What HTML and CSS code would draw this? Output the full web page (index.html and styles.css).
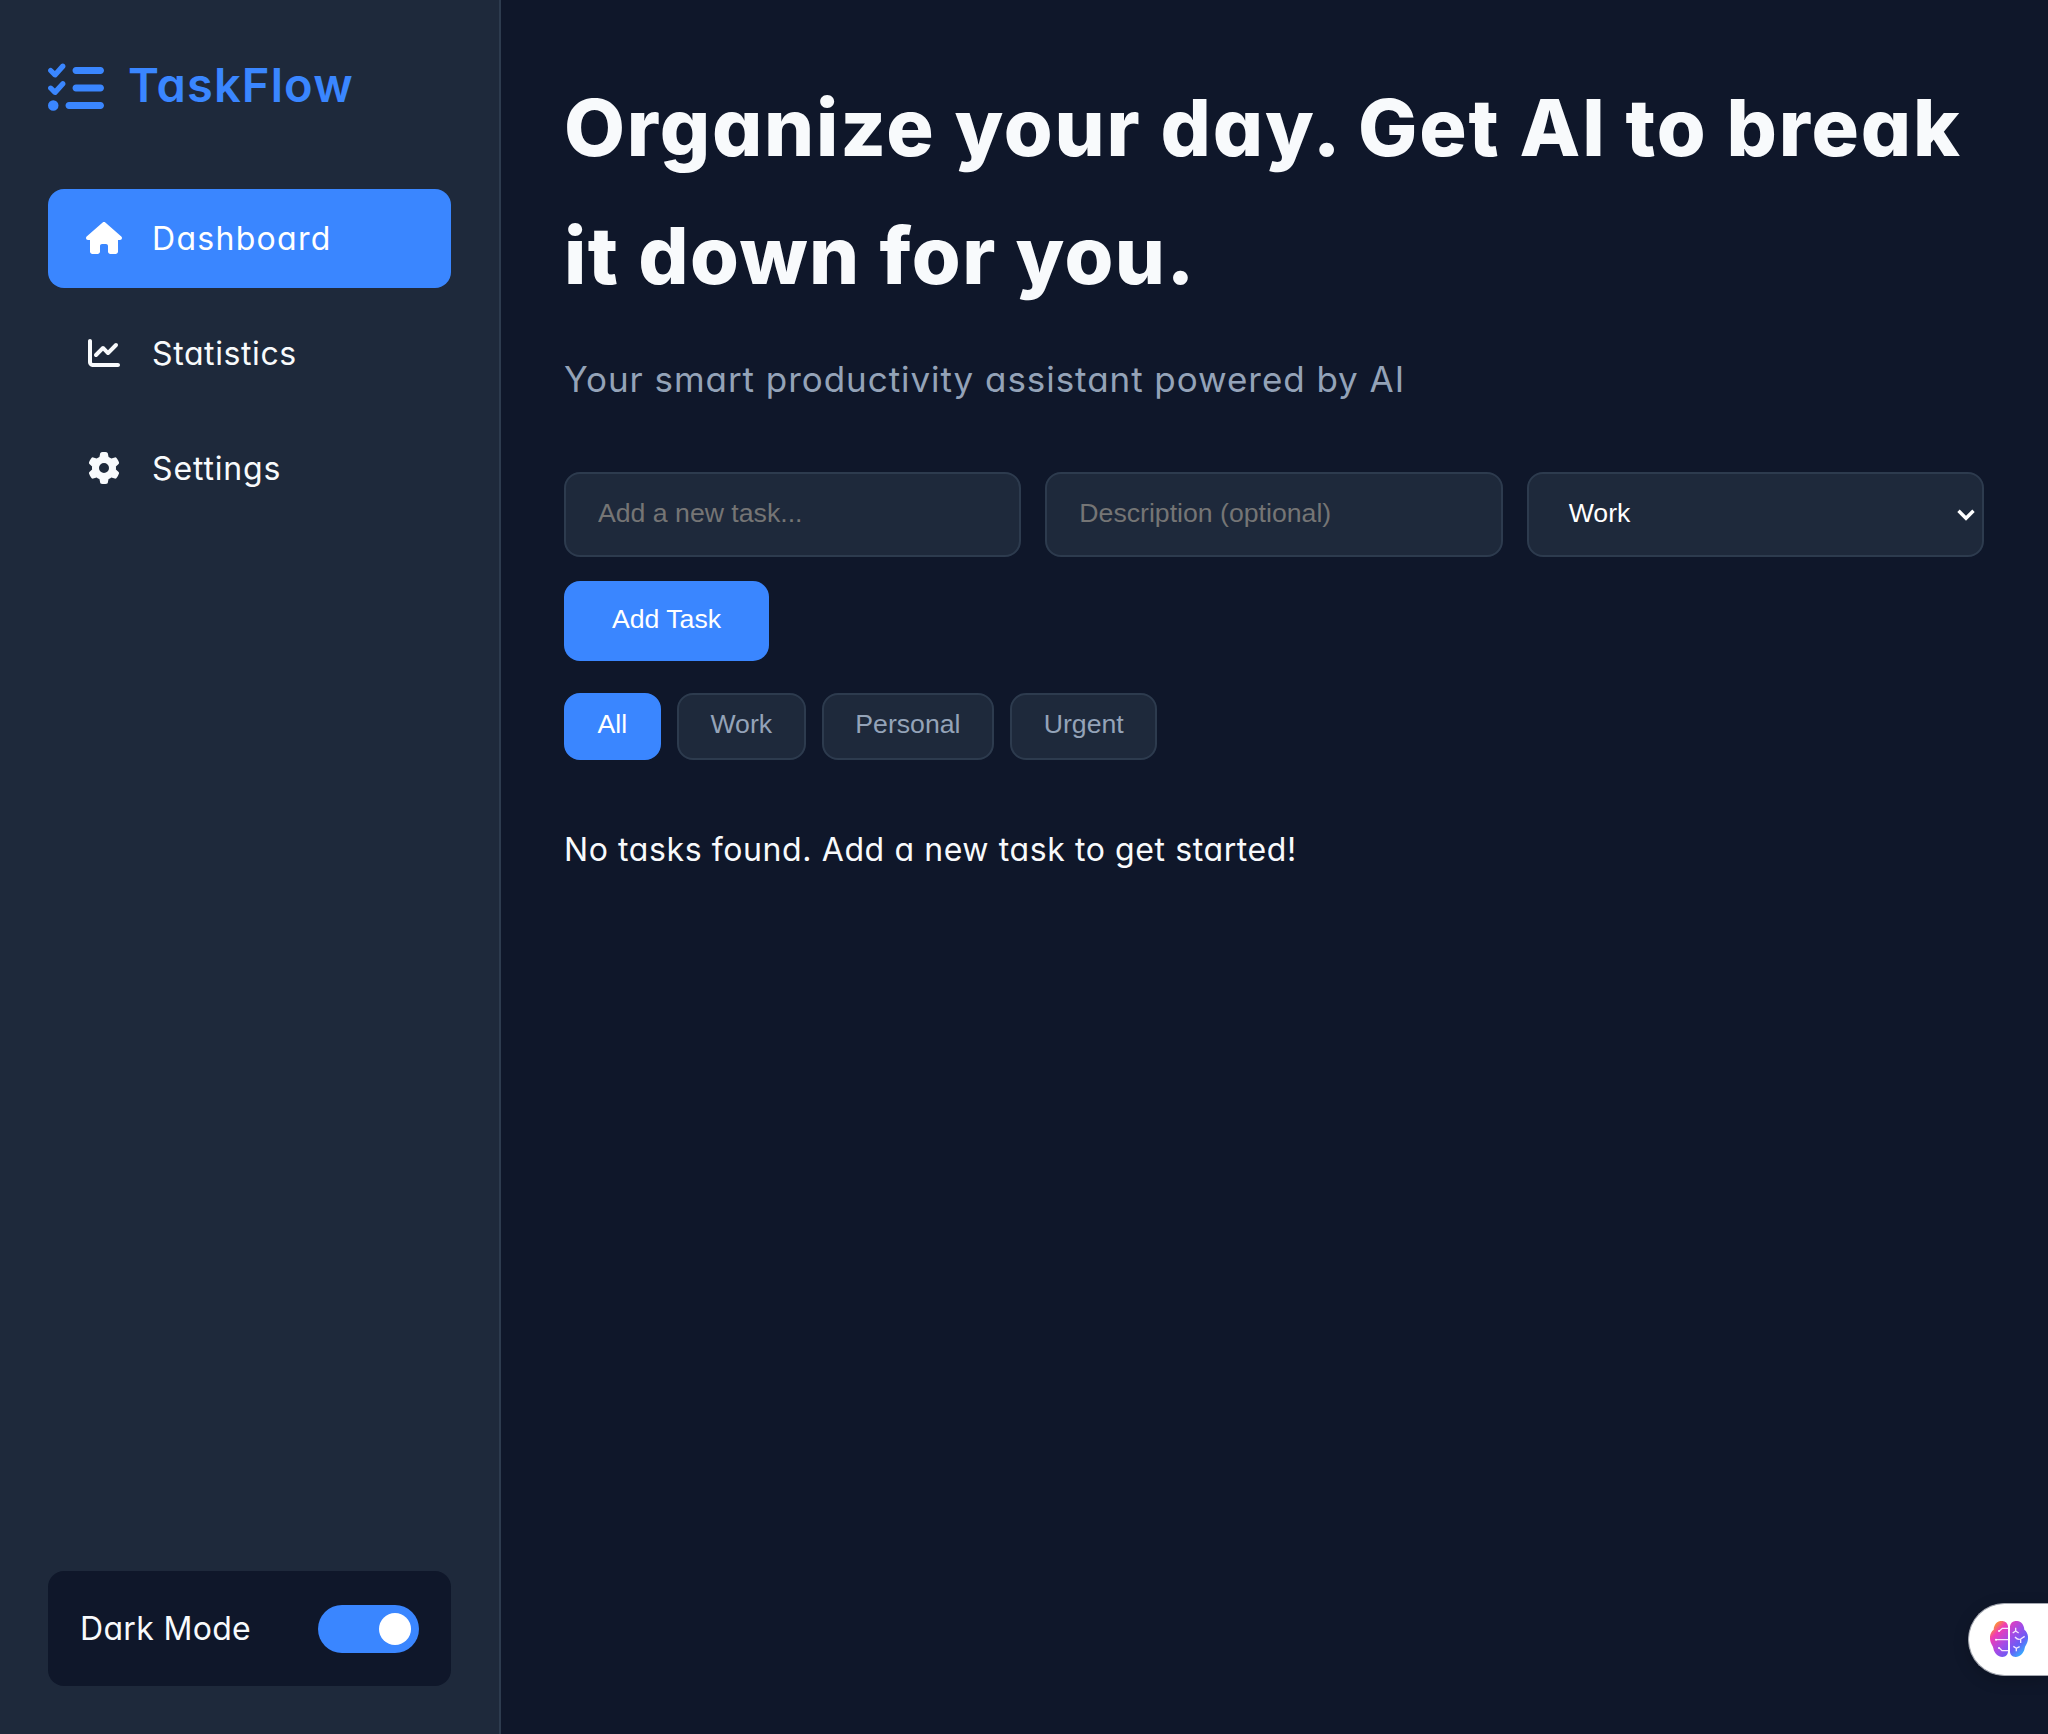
FILE: index.html
```html
<!DOCTYPE html>
<html lang="en">
<head>
<meta charset="utf-8">
<title>TaskFlow</title>
<link rel="stylesheet" href="styles.css">
</head>
<body>
<div class="app">
  <aside class="sidebar">
    <div class="logo">
      <svg class="logo-icon" viewBox="0 0 512 512"><path d="M152.1 38.2c9.9 8.9 10.7 24 1.8 33.900l-72 80c-4.400 4.900-10.600 7.800-17.200 7.900s-12.900-2.400-17.600-7L7 113C-2.300 103.600-2.300 88.400 7 79s24.600-9.400 33.900 0l22.100 22.100 55.100-61.200c8.900-9.900 24-10.700 33.900-1.800zm0 160c9.900 8.900 10.700 24 1.800 33.900l-72 80c-4.400 4.900-10.600 7.800-17.200 7.900s-12.900-2.400-17.600-7L7 273c-9.400-9.400-9.400-24.600 0-33.900s24.600-9.400 33.900 0l22.100 22.100 55.100-61.200c8.900-9.900 24-10.700 33.900-1.800zM224 96c0-17.700 14.300-32 32-32h224c17.700 0 32 14.300 32 32s-14.300 32-32 32H256c-17.700 0-32-14.300-32-32zm0 160c0-17.700 14.300-32 32-32h224c17.700 0 32 14.300 32 32s-14.300 32-32 32H256c-17.700 0-32-14.300-32-32zM160 416c0-17.700 14.300-32 32-32h288c17.700 0 32 14.300 32 32s-14.300 32-32 32H192c-17.700 0-32-14.300-32-32zM48 368a48 48 0 1 1 0 96 48 48 0 1 1 0-96z"/></svg>
      <span class="logo-name">TaskFlow</span>
    </div>
    <nav class="nav">
      <a class="nav-item active"><svg class="nav-icon home" viewBox="0 0 576 512"><path d="M575.8 255.500c0 18-15 32.100-32 32.100h-32l.7 160.200c0 2.700-.2 5.400-.5 8.100V472c0 22.100-17.900 40-40 40H392c-22.100 0-40-17.900-40-40V384c0-17.700-14.300-32-32-32H256c-17.700 0-32 14.300-32 32v88c0 22.100-17.900 40-40 40H104c-22.100 0-40-17.900-40-40V287.600H32c-18 0-32-14-32-32.100 0-9 3-17 10-24L266.400 8c7-7 15-8 22-8s15 2 21 7l255.400 224.500c8 7 12 15 11 24z"/></svg><span class="t-dash">Dashboard</span></a>
      <a class="nav-item"><svg class="nav-icon" viewBox="0 0 512 512"><path d="M64 64c0-17.700-14.300-32-32-32S0 46.300 0 64v336c0 44.200 35.800 80 80 80h400c17.700 0 32-14.300 32-32s-14.300-32-32-32H80c-8.800 0-16-7.200-16-16V64zm406.600 86.600c12.500-12.500 12.500-32.800 0-45.300s-32.800-12.500-45.300 0L320 210.700l-57.400-57.400c-12.500-12.500-32.800-12.500-45.300 0l-112 112c-12.500 12.500-12.500 32.800 0 45.300s32.800 12.500 45.300 0L240 221.300l57.400 57.400c12.500 12.500 32.800 12.500 45.300 0l128-128z"/></svg><span class="t-stat">Statistics</span></a>
      <a class="nav-item"><svg class="nav-icon" viewBox="0 0 512 512"><path d="M495.900 166.600c3.200 8.700 .5 18.400-6.400 24.600l-43.300 39.400c1.100 8.300 1.700 16.800 1.700 25.400s-.6 17.100-1.700 25.400l43.300 39.400c6.900 6.200 9.600 15.900 6.400 24.600c-4.400 11.900-9.700 23.300-15.800 34.300l-4.700 8.100c-6.600 11-14 21.400-22.100 31.200c-5.900 7.200-15.700 9.600-24.500 6.800l-55.700-17.700c-13.400 10.300-28.200 18.900-44 25.400l-12.500 57.100c-2 9.100-9 16.300-18.200 17.800c-13.800 2.300-28 3.500-42.500 3.500s-28.700-1.200-42.500-3.500c-9.200-1.500-16.200-8.700-18.200-17.800l-12.500-57.100c-15.800-6.500-30.600-15.100-44-25.400L83.100 425.900c-8.800 2.800-18.600 .3-24.500-6.800c-8.100-9.800-15.500-20.200-22.100-31.200l-4.700-8.100c-6.100-11-11.400-22.400-15.800-34.300c-3.200-8.700-.5-18.400 6.400-24.600l43.300-39.400C64.600 273.100 64 264.600 64 256s.6-17.100 1.700-25.400L22.400 191.200c-6.900-6.200-9.600-15.900-6.400-24.600c4.400-11.900 9.700-23.300 15.800-34.300l4.700-8.100c6.600-11 14-21.400 22.100-31.200c5.900-7.200 15.700-9.600 24.500-6.800l55.700 17.700c13.400-10.300 28.200-18.900 44-25.400l12.500-57.100c2-9.100 9-16.300 18.200-17.800C227.300 1.200 241.500 0 256 0s28.700 1.200 42.500 3.500c9.200 1.500 16.200 8.700 18.200 17.800l12.500 57.100c15.800 6.500 30.600 15.100 44 25.400l55.700-17.700c8.800-2.800 18.600-.3 24.500 6.800c8.100 9.800 15.500 20.200 22.100 31.200l4.700 8.100c6.100 11 11.400 22.400 15.800 34.300zM256 336a80 80 0 1 0 0-160 80 80 0 1 0 0 160z"/></svg><span class="t-sett">Settings</span></a>
    </nav>
    <div class="theme">
      <span class="t-dark">Dark Mode</span>
      <div class="switch"><div class="knob"></div></div>
    </div>
  </aside>
  <main class="main">
    <h1 class="title">Organize your day. Get AI to break<br><span class="title-end">it down for you.</span></h1>
    <p class="subtitle">Your smart productivity assistant powered by AI</p>
    <form class="task-form">
      <input class="field" type="text" placeholder="Add a new task...">
      <input class="field" type="text" placeholder="Description (optional)">
      <div class="field select"><span>Work</span><svg class="chevron" viewBox="0 0 18 12"><path d="M1.500 1.800 9 9.300 16.500 1.800"/></svg></div>
      <button class="add" type="button">Add Task</button>
    </form>
    <div class="filters">
      <button class="filter on">All</button>
      <button class="filter">Work</button>
      <button class="filter">Personal</button>
      <button class="filter">Urgent</button>
    </div>
    <p class="empty">No tasks found. Add a new task to get started!</p>
  </main>
</div>
<div class="assistant">
  <svg class="brain" viewBox="18 20 114 108">
    <defs>
      <linearGradient id="brain-fill" gradientUnits="userSpaceOnUse" x1="30" y1="28" x2="122" y2="116">
        <stop offset="0" stop-color="#ffa01e"/>
        <stop offset=".2" stop-color="#f03cb4"/>
        <stop offset=".5" stop-color="#a44be6"/>
        <stop offset=".75" stop-color="#6a5cf5"/>
        <stop offset="1" stop-color="#2fb4ff"/>
      </linearGradient>
    </defs>
    <path fill="url(#brain-fill)" d="M72 36C71 24 61 19 50 20C39 21 30 31 29 46C19 54 15 66 20 84C23 92 27 95 28 102C31 118 42 128 55 128C66 128 72 121 72 111ZM78 36C79 24 89 19 100 20C111 21 120 31 121 46C131 54 135 66 130 84C127 92 123 95 122 102C119 118 108 128 95 128C84 128 78 121 78 111Z"/>
    <g class="circuits">
      <path d="M46 50 55 42H72M36 76H72M46 101 54 109H72"/>
      <path d="M86 56 95 50 104 56M95 50V40M93 68Q101 78 110 74L122 66M110 75V86M88 96 97 102 107 97M97 102V111"/>
      <circle cx="45" cy="50" r="3"/><circle cx="36" cy="76" r="3"/><circle cx="45" cy="101" r="3"/>
    </g>
  </svg>
</div>
</body>
</html>
```
FILE: styles.css
```css
* { box-sizing: border-box; margin: 0; padding: 0; }

body {
  background: #0f172a;
  color: #f8fafc;
  font-family: Inter, sans-serif;
  font-feature-settings: "cv11";
  font-size: 32px;
  line-height: 51px;
}

.app { display: flex; height: 1734px; overflow: hidden; }

/* Sidebar */
.sidebar {
  display: flex;
  flex-direction: column;
  flex: none;
  width: 501px;
  padding: 48px;
  background: #1e293b;
  border-right: 2px solid #2d3b4e;
}
.logo {
  display: flex;
  align-items: center;
  gap: 24px;
  height: 77px;
  margin-bottom: 64px;
  color: #3a86ff;
  font-size: 47px;
  font-weight: 600;
  letter-spacing: 1.15px;
}
.logo-name { padding-bottom: 5px; }
.logo-icon { width: 56px; height: 56px; margin-top: 2px; fill: currentColor; }

.nav { display: flex; flex-direction: column; gap: 16px; }
.nav-item {
  display: flex;
  align-items: center;
  gap: 32px;
  height: 99px;
  padding: 0 40px 0 38px;
  border-radius: 16px;
}
.nav-item.active { background: #3a86ff; color: #fff; }
.nav-icon { width: 36px; height: 32px; margin: 0 -2px 1px 0; fill: currentColor; }
.t-dash { letter-spacing: 1.3px; }
.t-stat { letter-spacing: .6px; }
.t-sett { letter-spacing: .85px; }
.t-dark { letter-spacing: .33px; }

.theme {
  display: flex;
  align-items: center;
  justify-content: space-between;
  height: 115px;
  margin-top: auto;
  padding: 0 32px;
  border-radius: 16px;
  background: #0f172a;
}
.switch {
  display: flex;
  justify-content: flex-end;
  width: 101px;
  height: 48px;
  padding: 8px;
  border-radius: 24px;
  background: #3a86ff;
}
.knob { width: 32px; height: 32px; border-radius: 50%; background: #fff; }

/* Main column */
.main { flex: 1; padding: 63px 64px 64px 63px; }
.title {
  font-size: 79px;
  line-height: 128px;
  font-weight: 800;
  letter-spacing: 1.8px;
  white-space: nowrap;
}
.title-end { letter-spacing: 1.45px; }
.subtitle {
  margin: 32px 0 65px;
  font-size: 35px;
  line-height: 56px;
  letter-spacing: .95px;
  color: #94a3b8;
}

.task-form { display: grid; grid-template-columns: repeat(3, 1fr); gap: 24px; }
.field, .add, .filter {
  font-family: "Liberation Sans", Arial, sans-serif;
  font-size: 26.67px;
  border-radius: 16px;
}
.field {
  height: 85px;
  padding: 0 32px 2px;
  border: 2px solid #2d3b4e;
  background: #1e293b;
  color: #fff;
}
.field::placeholder { color: #757575; }
.select {
  display: flex;
  align-items: center;
  justify-content: space-between;
  padding: 0 7px 2px 40px;
}
.chevron {
  width: 18px;
  height: 12px;
  margin-top: 3px;
  fill: none;
  stroke: #fff;
  stroke-width: 3.4;
}
.add {
  width: 205px;
  height: 80px;
  padding-bottom: 3px;
  border: 0;
  background: #3a86ff;
  color: #fff;
}

.filters { display: flex; gap: 16px; margin-top: 32px; }
.filter {
  height: 67px;
  padding: 0 31.6px 4px;
  border: 2px solid #2d3b4e;
  background: #1e293b;
  color: #94a3b8;
}
.filter.on { background: #3a86ff; border-color: #3a86ff; color: #fff; }

.empty { margin-top: 64px; letter-spacing: .6px; }

/* Assistant tab docked to the right edge */
.assistant {
  position: fixed;
  right: 0;
  top: 1603px;
  display: flex;
  align-items: center;
  width: 80px;
  height: 73px;
  padding-left: 21px;
  border: 1px solid #a3a7b0;
  border-right: 0;
  border-radius: 37px 0 0 37px;
  background: #fff;
  box-shadow: 0 4px 16px rgba(0, 0, 0, .2);
}
.brain { width: 38px; height: 36px; margin-bottom: 1px; }
.circuits path { fill: none; stroke: #f6e6ff; stroke-width: 4; }
.circuits circle { fill: #fff; }
```
